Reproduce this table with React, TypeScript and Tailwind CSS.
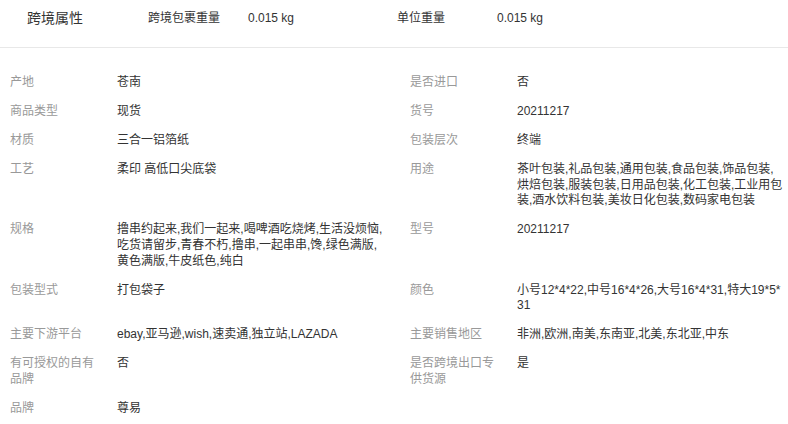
const FONT = '"Liberation Sans", "Noto Sans CJK SC", sans-serif';

type Row = { label: string; value: string };

const headerItems: Row[] = [
  { label: '跨境包裹重量', value: '0.015 kg' },
  { label: '单位重量', value: '0.015 kg' },
];

// each entry is [left cell, right cell]
const rows: [Row, Row | null][] = [
  [{ label: '产地', value: '苍南' }, { label: '是否进口', value: '否' }],
  [{ label: '商品类型', value: '现货' }, { label: '货号', value: '20211217' }],
  [{ label: '材质', value: '三合一铝箔纸' }, { label: '包装层次', value: '终端' }],
  [
    { label: '工艺', value: '柔印 高低口尖底袋' },
    {
      label: '用途',
      value:
        '茶叶包装,礼品包装,通用包装,食品包装,饰品包装,烘焙包装,服装包装,日用品包装,化工包装,工业用包装,酒水饮料包装,美妆日化包装,数码家电包装',
    },
  ],
  [
    {
      label: '规格',
      value: '撸串约起来,我们一起来,喝啤酒吃烧烤,生活没烦恼,吃货请留步,青春不朽,撸串,一起串串,馋,绿色满版,黄色满版,牛皮纸色,纯白',
    },
    { label: '型号', value: '20211217' },
  ],
  [
    { label: '包装型式', value: '打包袋子' },
    { label: '颜色', value: '小号12*4*22,中号16*4*26,大号16*4*31,特大19*5*31' },
  ],
  [
    { label: '主要下游平台', value: 'ebay,亚马逊,wish,速卖通,独立站,LAZADA' },
    { label: '主要销售地区', value: '非洲,欧洲,南美,东南亚,北美,东北亚,中东' },
  ],
  [
    { label: '有可授权的自有品牌', value: '否' },
    { label: '是否跨境出口专供货源', value: '是' },
  ],
  [{ label: '品牌', value: '尊易' }, null],
];

function Cell({ item }: { item: Row | null }) {
  return (
    <div className="flex w-[400px] shrink-0 pl-[10px]">
      {item && (
        <>
          <div className="w-[86px] mr-[21px] shrink-0 text-[#999]">{item.label}</div>
          <div className="w-[266px] break-all text-[#333]">{item.value}</div>
        </>
      )}
    </div>
  );
}

export default function App() {
  return (
    <div className="w-[788px] h-[424px] overflow-hidden bg-white" style={{ fontFamily: FONT }}>
      {/* cross-border header */}
      <div className="flex h-[48px] items-start border-b border-[#e8e8e8] pl-[27px] pt-[8px]">
        <div className="w-[121px] text-[14px] leading-[20px] text-[#333]">跨境属性</div>
        {headerItems.map((h) => (
          <div key={h.label} className="flex w-[249px] pt-[1px] text-[12px] leading-[18px] text-[#333]">
            <div className="w-[100px]">{h.label}</div>
            <div>{h.value}</div>
          </div>
        ))}
      </div>

      <div className="pt-[20px] text-[12px] leading-[15.6px]">
        {rows.map(([l, r], i) => (
          <div key={i} className="flex py-[6.75px]">
            <Cell item={l} />
            <Cell item={r} />
          </div>
        ))}
      </div>
    </div>
  );
}
